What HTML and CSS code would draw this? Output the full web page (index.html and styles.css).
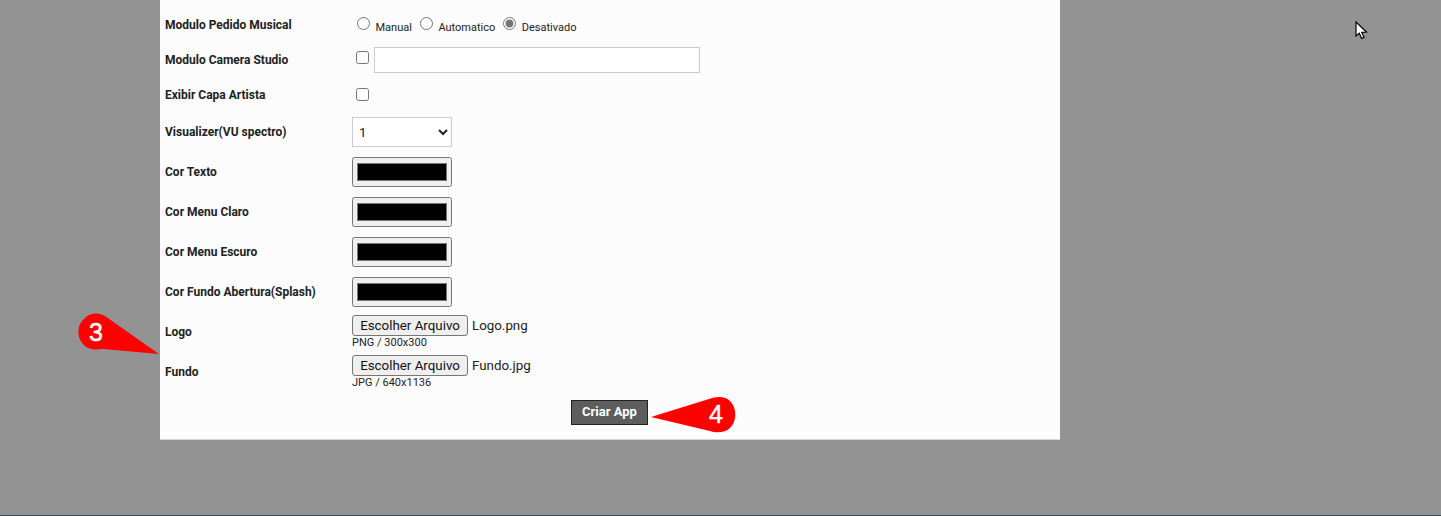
FILE: index.html
```html
<!DOCTYPE html>
<html lang="pt">
<head>
<meta charset="utf-8">
<title>Criar App</title>
<link rel="stylesheet" href="styles.css">
</head>
<body>
<main class="panel">
  <form class="form">
    <div class="row row-35">
      <label class="label">Modulo Pedido Musical</label>
      <div class="field radios">
        <input type="radio" name="pedido" class="radio"><span class="opt">Manual</span>
        <input type="radio" name="pedido" class="radio"><span class="opt">Automatico</span>
        <input type="radio" name="pedido" class="radio" checked><span class="opt">Desativado</span>
      </div>
    </div>
    <div class="row row-35">
      <label class="label">Modulo Camera Studio</label>
      <div class="field">
        <input type="checkbox" class="check check-raised">
        <input type="text" class="text">
      </div>
    </div>
    <div class="row row-35">
      <label class="label">Exibir Capa Artista</label>
      <div class="field"><input type="checkbox" class="check"></div>
    </div>
    <div class="row row-40">
      <label class="label">Visualizer(VU spectro)</label>
      <div class="field"><select class="select"><option>1</option></select></div>
    </div>
    <div class="row row-40">
      <label class="label">Cor Texto</label>
      <div class="field"><input type="color" class="color" value="#000000"></div>
    </div>
    <div class="row row-40">
      <label class="label">Cor Menu Claro</label>
      <div class="field"><input type="color" class="color" value="#000000"></div>
    </div>
    <div class="row row-40">
      <label class="label">Cor Menu Escuro</label>
      <div class="field"><input type="color" class="color" value="#000000"></div>
    </div>
    <div class="row row-40">
      <label class="label">Cor Fundo Abertura(Splash)</label>
      <div class="field"><input type="color" class="color" value="#000000"></div>
    </div>
    <div class="row row-40">
      <label class="label">Logo</label>
      <div class="file">
        <div class="file-line"><button type="button" class="file-btn">Escolher Arquivo</button><span class="file-name">Logo.png</span></div>
        <small class="hint">PNG / 300x300</small>
      </div>
    </div>
    <div class="row row-40">
      <label class="label">Fundo</label>
      <div class="file">
        <div class="file-line"><button type="button" class="file-btn">Escolher Arquivo</button><span class="file-name">Fundo.jpg</span></div>
        <small class="hint">JPG / 640x1136</small>
      </div>
    </div>
    <div class="actions">
      <button type="button" class="submit">Criar App</button>
    </div>
  </form>
</main>
<footer class="bottom-line"></footer>

<svg class="callout callout-3" width="90" height="50" viewBox="0 0 90 50" aria-hidden="true">
  <path class="callout-shape" d="M28 4 C23 1 14 0 8 6 C0 12 -1 24 6 32 C11 38 19 38 26 37 L82 42 Z"/>
  <text class="callout-num" x="19" y="29">3</text>
</svg>
<svg class="callout callout-4" width="90" height="40" viewBox="0 0 90 40" aria-hidden="true">
  <path class="callout-shape" d="M1 21 L59 3 C66 0 76 0 80 5 C87 11 87 26 80 32 C75 37 66 37 60 35 Z"/>
  <text class="callout-num" x="66" y="27">4</text>
</svg>
<svg class="cursor" width="14" height="20" viewBox="0 0 14 20" aria-hidden="true">
  <path class="cursor-shape" d="M1 1 L1 15 L4.3 12.2 L6.6 17.5 L9 16.4 L6.8 11.4 L11.5 11 Z"/>
</svg>
</body>
</html>
```
FILE: styles.css
```css
* { box-sizing: border-box; }

html, body {
  margin: 0;
  height: 516px;
  overflow: hidden;
}

body {
  position: relative;
  display: flex;
  flex-direction: column;
  background: #939393;
  font-family: Roboto, "Liberation Sans", sans-serif;
  color: #222;
}

.panel {
  width: 900px;
  height: 440px;
  margin-left: 160px;
  background: #fff;
  border-bottom: 1px solid #d8d8d8;
}

.form {
  height: 432px;
  padding-top: 7px;
  background: #fcfcfc;
}

.row {
  display: flex;
  align-items: center;
}

.row-35 { height: 35px; }
.row-40 { height: 40px; }

.label {
  width: 192px;
  padding-left: 5px;
  font-size: 12px;
  font-weight: 700;
  color: #222;
}

.field {
  display: flex;
  align-items: center;
}

.radios { padding-left: 4px; }

.radio {
  width: 13px;
  height: 13px;
  margin: 0 5.5px 0 1px;
  position: relative;
  top: -1px;
  accent-color: #767676;
}

.opt {
  font-size: 11px;
  margin-right: 7px;
  padding-top: 5px;
}

.check {
  width: 13px;
  height: 13px;
  margin: 0 5px 0 4px;
}

.check-raised {
  position: relative;
  top: -2px;
}

.text {
  width: 326px;
  height: 26px;
  border: 1px solid #ccc;
  background: #fff;
}

.select {
  width: 100px;
  height: 30px;
  padding: 0 2px;
  border: 1px solid #ccc;
  background: #fff;
  font-family: Roboto, sans-serif;
  font-size: 13.33px;
  color: #222;
}

.color {
  display: block;
  width: 100px;
  height: 30px;
}

.file {
  align-self: flex-start;
  padding-top: 3px;
}

.file-line {
  display: flex;
  align-items: center;
}

.file-btn {
  width: 116px;
  height: 21px;
  padding: 0;
  border: 1px solid #767676;
  border-radius: 3px;
  background: #efefef;
  font-family: Roboto, sans-serif;
  font-size: 13.33px;
  color: #111;
}

.file-name {
  margin-left: 4px;
  font-size: 13.33px;
  color: #222;
}

.hint {
  display: block;
  padding-top: 1px;
  font-size: 11px;
  line-height: 12px;
  color: #222;
}

.actions {
  display: flex;
  justify-content: center;
  padding: 8px 1px 0 0;
}

.submit {
  width: 77px;
  height: 25px;
  padding: 0 0 2px;
  border: 1px solid #222;
  background: #5d5d5d;
  font-family: Roboto, sans-serif;
  font-size: 13px;
  font-weight: 700;
  color: #fff;
}

.bottom-line {
  margin-top: auto;
  height: 1px;
  background: #3c4a54;
}

.callout {
  position: absolute;
  overflow: visible;
}

.callout-3 { left: 76.5px; top: 312px; }
.callout-4 { left: 650px; top: 396px; }

.callout-shape { fill: #ff0000; }

.callout-num {
  fill: #fff;
  font-family: "Liberation Sans", sans-serif;
  font-size: 25px;
  font-weight: 400;
  stroke: #fff;
  stroke-width: 0.5;
  text-anchor: middle;
}

.cursor {
  position: absolute;
  left: 1355px;
  top: 21px;
}

.cursor-shape {
  fill: #fff;
  stroke: #000;
  stroke-width: 1.2;
  stroke-linejoin: miter;
}
```
